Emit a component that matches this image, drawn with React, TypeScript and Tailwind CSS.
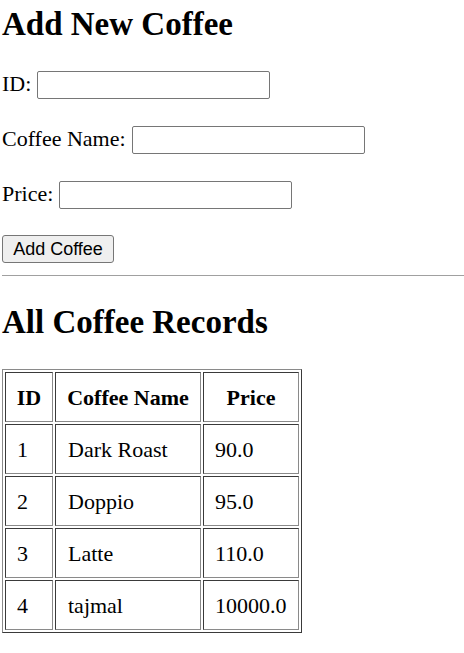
const coffees = [
  { id: 1, name: "Dark Roast", price: "90.0" },
  { id: 2, name: "Doppio", price: "95.0" },
  { id: 3, name: "Latte", price: "110.0" },
  { id: 4, name: "tajmal", price: "10000.0" },
];

function Field({ label, mt }: { label: string; mt: string }) {
  return (
    <div className={`flex h-[28px] items-center gap-[6px] ${mt}`}>
      <label className="-mt-[4px] text-[22px] leading-[25px]">{label}</label>
      <input
        type="text"
        className="h-[28px] w-[233px] rounded-[2px] border border-[#767676] bg-white px-[3px] outline-none"
      />
    </div>
  );
}

export default function App() {
  return (
    <div className="min-h-screen bg-white pl-[2px] pt-[6px] font-['Liberation_Serif',serif] text-black">
      <h1 className="text-[33px] font-bold leading-[36px]">Add New Coffee</h1>

      <Field label="ID:" mt="mt-[29px]" />
      <Field label="Coffee Name:" mt="mt-[27px]" />
      <Field label="Price:" mt="mt-[27px]" />

      <button
        type="button"
        className="mt-[26px] h-[28px] w-[112px] rounded-[3px] border border-[#767676] bg-[#efefef] font-['Liberation_Sans',sans-serif] text-[18px] leading-none"
      >
        Add Coffee
      </button>

      <hr className="mt-[12px] border-0 border-t border-[#a0a0a0]" />

      <h2 className="mt-[28px] text-[33px] font-bold leading-[36px]">All Coffee Records</h2>

      <table className="mt-[29px] border-separate border-spacing-[2px] border border-t-[#8a8a8a] border-l-[#8a8a8a] border-r-[#3a3a3a] border-b-[#3a3a3a] text-[22px] leading-[25px]">
        <thead>
          <tr>
            <th className="h-[50px] w-[48px] border border-t-[#3a3a3a] border-l-[#3a3a3a] border-r-[#8a8a8a] border-b-[#8a8a8a] px-[10px] text-center font-bold">
              ID
            </th>
            <th className="h-[50px] w-[146px] border border-t-[#3a3a3a] border-l-[#3a3a3a] border-r-[#8a8a8a] border-b-[#8a8a8a] px-[10px] text-center font-bold">
              Coffee Name
            </th>
            <th className="h-[50px] w-[96px] border border-t-[#3a3a3a] border-l-[#3a3a3a] border-r-[#8a8a8a] border-b-[#8a8a8a] px-[10px] text-center font-bold">
              Price
            </th>
          </tr>
        </thead>
        <tbody>
          {coffees.map((c) => (
            <tr key={c.id}>
              <td className="h-[50px] border border-t-[#3a3a3a] border-l-[#3a3a3a] border-r-[#8a8a8a] border-b-[#8a8a8a] px-[11px]">
                {c.id}
              </td>
              <td className="h-[50px] border border-t-[#3a3a3a] border-l-[#3a3a3a] border-r-[#8a8a8a] border-b-[#8a8a8a] px-[12px]">
                {c.name}
              </td>
              <td className="h-[50px] border border-t-[#3a3a3a] border-l-[#3a3a3a] border-r-[#8a8a8a] border-b-[#8a8a8a] px-[11px]">
                {c.price}
              </td>
            </tr>
          ))}
        </tbody>
      </table>
    </div>
  );
}
